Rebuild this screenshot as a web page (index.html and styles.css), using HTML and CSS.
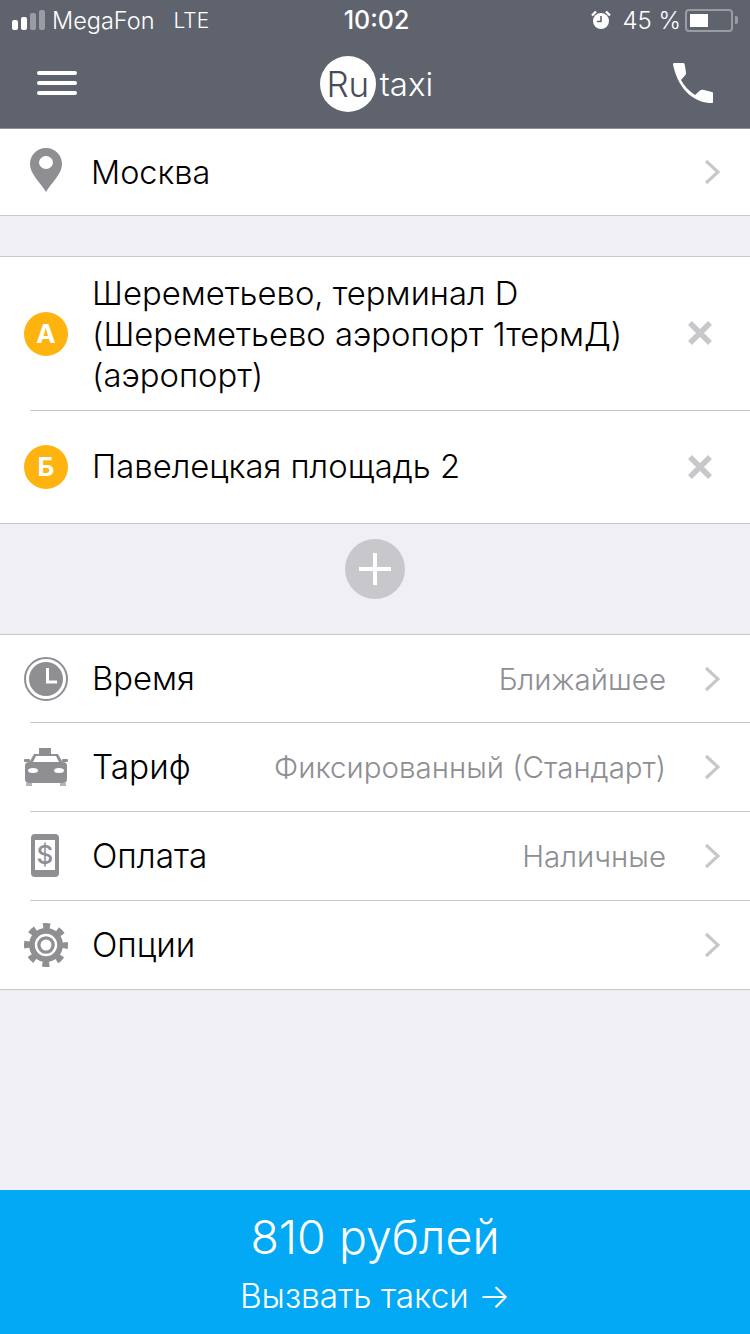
FILE: index.html
```html
<!DOCTYPE html>
<html>
<head>
    <meta charset="UTF-8">
    <meta name="viewport" content="width=device-width, initial-scale=1.0">
    <title>Rutaxi</title>
    <link rel="stylesheet" href="styles.css">
</head>
<body>
    <div class="top">
        <div class="status">
            <div class="status-left">
                <div class="signal"><i class="on"></i><i class="on"></i><i></i><i></i></div>
                <span class="carrier">MegaFon</span>
                <span class="net">LTE</span>
            </div>
            <div class="clock-text">10:02</div>
            <div class="status-right">
                <svg class="alarm" width="22" height="22" viewBox="0 0 22 22">
                    <circle cx="11" cy="12" r="8" fill="#fff"/>
                    <path d="M11 7v5.500H7" fill="none" stroke="#5f636e" stroke-width="1.600"/>
                    <path d="M2 6.500 6 2.500M20 6.500l-4-4" stroke="#fff" stroke-width="2.400"/>
                </svg>
                <span class="percent">45 %</span>
                <div class="battery"><div class="battery-fill"></div></div>
                <div class="battery-tip"></div>
            </div>
        </div>
        <div class="header">
            <div class="burger"><i></i><i></i><i></i></div>
            <div class="logo"><span class="logo-ru">Ru</span><span class="logo-taxi">taxi</span></div>
            <svg class="phone" width="41" height="41" viewBox="0 0 41 41">
                <path d="M0 1.500C0 .5.500 0 1.500 0H10c1 0 1.500.5 1.700 1.500L13 9.500c.2 1.500-.5 2.500-1.500 3.500L8 17c3 6 8 11 14 15l5-4.500c1-1 2-1 3-.7l9 2.200c1 .3 1 1 1 2v8c0 1-.5 1-1.500 1C24 40 6 30 0 1.500z" fill="#fff"/>
            </svg>
        </div>
    </div>

    <div class="group city">
        <div class="row row-city">
            <svg class="icon pin" width="44" height="44" viewBox="0 0 44 44">
                <path fill-rule="evenodd" d="M22 0c9 0 16 7 16 16 0 10-10 18-16 28C16 34 6 26 6 16 6 7 13 0 22 0zm0 8a7 6.500 0 1 0 0 13 7 6.500 0 1 0 0-13z" fill="#8e8e93"/>
            </svg>
            <div class="label">Москва</div>
            <svg class="chevron" width="16" height="26" viewBox="0 0 16 26"><path d="M2 2l12 11L2 24" fill="none" stroke="#c7c7cc" stroke-width="3.200"/></svg>
        </div>
    </div>

    <div class="group route">
        <div class="row row-a">
            <div class="point">А</div>
            <div class="label">Шереметьево, терминал D<br>(Шереметьево аэропорт 1термД)<br>(аэропорт)</div>
            <svg class="cross" width="26" height="26" viewBox="0 0 26 26"><path d="M3 3l20 20M23 3L3 23" stroke="#c7c7cc" stroke-width="5.500"/></svg>
        </div>
        <div class="row row-b">
            <div class="point">Б</div>
            <div class="label">Павелецкая площадь 2</div>
            <svg class="cross" width="26" height="26" viewBox="0 0 26 26"><path d="M3 3l20 20M23 3L3 23" stroke="#c7c7cc" stroke-width="5.500"/></svg>
        </div>
    </div>

    <div class="add-wrap">
        <div class="add">
            <svg width="32" height="32" viewBox="0 0 32 32"><path d="M16 0v32M0 16h32" stroke="#fff" stroke-width="4"/></svg>
        </div>
    </div>

    <div class="group options">
        <div class="row row-opt row-time">
            <svg class="icon" width="44" height="44" viewBox="0 0 44 44">
                <circle cx="22" cy="22" r="21" fill="none" stroke="#8e8e93" stroke-width="2"/>
                <circle cx="22" cy="22" r="17" fill="#8e8e93"/>
                <path d="M23.500 11v14H33" fill="none" stroke="#fff" stroke-width="3"/>
            </svg>
            <div class="label">Время</div>
            <div class="value">Ближайшее</div>
            <svg class="chevron" width="16" height="26" viewBox="0 0 16 26"><path d="M2 2l12 11L2 24" fill="none" stroke="#c7c7cc" stroke-width="3.200"/></svg>
        </div>
        <div class="row row-opt">
            <svg class="icon" width="44" height="38" viewBox="0 0 44 38">
                <rect x="15" y="0" width="12" height="6" fill="#8e8e93"/>
                <path d="M10 6h24l5 9H5z" fill="#8e8e93"/>
                <path d="M8.500 15l3.500-7h20l3.500 7z" fill="#fff"/>
                <rect x="0" y="11" width="6" height="3" rx="1" fill="#8e8e93"/>
                <rect x="38" y="11" width="6" height="3" rx="1" fill="#8e8e93"/>
                <rect x="1" y="14" width="42" height="21" rx="4" fill="#8e8e93"/>
                <ellipse cx="9" cy="22.500" rx="5" ry="2.500" fill="#fff"/>
                <ellipse cx="35" cy="22.500" rx="5" ry="2.500" fill="#fff"/>
                <rect x="2" y="35" width="6" height="3" fill="#b5b5b9"/>
                <rect x="36" y="35" width="6" height="3" fill="#b5b5b9"/>
            </svg>
            <div class="label">Тариф</div>
            <div class="value">Фиксированный (Стандарт)</div>
            <svg class="chevron" width="16" height="26" viewBox="0 0 16 26"><path d="M2 2l12 11L2 24" fill="none" stroke="#c7c7cc" stroke-width="3.200"/></svg>
        </div>
        <div class="row row-opt">
            <svg class="icon" width="44" height="44" viewBox="0 0 44 44">
                <rect x="7" y="0" width="28" height="43" rx="4" fill="#8e8e93"/>
                <rect x="11" y="6" width="20" height="30" fill="#fff"/>
                <text class="dollar" x="21" y="30">$</text>
            </svg>
            <div class="label">Оплата</div>
            <div class="value">Наличные</div>
            <svg class="chevron" width="16" height="26" viewBox="0 0 16 26"><path d="M2 2l12 11L2 24" fill="none" stroke="#c7c7cc" stroke-width="3.200"/></svg>
        </div>
        <div class="row row-opt">
            <svg class="icon" width="44" height="44" viewBox="0 0 44 44">
                <circle cx="22" cy="22" r="19" fill="none" stroke="#8e8e93" stroke-width="6" stroke-dasharray="7 7.920" stroke-dashoffset="3.500"/>
                <circle cx="22" cy="22" r="17" fill="#8e8e93"/>
                <circle cx="22" cy="22" r="10" fill="none" stroke="#fff" stroke-width="2.400"/>
                <circle cx="22" cy="22" r="5.500" fill="#fff"/>
            </svg>
            <div class="label">Опции</div>
            <svg class="chevron" width="16" height="26" viewBox="0 0 16 26"><path d="M2 2l12 11L2 24" fill="none" stroke="#c7c7cc" stroke-width="3.200"/></svg>
        </div>
    </div>

    <div class="order">
        <div class="price">810 рублей</div>
        <div class="call">Вызвать такси →</div>
    </div>
</body>
</html>
```

FILE: styles.css
```css
* {
    box-sizing: border-box;
}

body {
    margin: 0;
    width: 750px;
    height: 1334px;
    display: flex;
    flex-direction: column;
    background: #efeff4;
    color: #000;
    font-family: Inter, "Noto Sans", sans-serif;
    font-weight: 300;
    overflow: hidden;
}

.top {
    height: 129px;
    background: #5f636e;
    border-bottom: 1px solid #8f9198;
    color: #fff;
}

.status {
    height: 40px;
    display: flex;
    align-items: center;
    justify-content: space-between;
    padding: 0 12px;
    font-size: 24px;
    font-weight: 400;
}

.status-left, .status-right {
    width: 300px;
    display: flex;
    align-items: center;
}

.status-right {
    justify-content: flex-end;
}

.signal {
    display: flex;
    align-items: flex-end;
    gap: 3px;
    margin-right: 7px;
}

.signal i {
    width: 6px;
    height: 20px;
    border-radius: 2px;
    background: #9a9ca3;
}

.signal i:nth-child(1) {
    height: 10px;
}

.signal i:nth-child(2) {
    height: 13px;
}

.signal i:nth-child(3) {
    height: 17px;
}

.signal i.on {
    background: #fff;
}

.carrier {
    font-size: 23.500px;
    font-weight: 300;
}

.net {
    margin-left: 19px;
    font-size: 21px;
    font-weight: 300;
}

.clock-text {
    font-size: 25px;
    font-weight: 500;
    margin-left: 3px;
}

.alarm {
    margin-right: 10px;
}

.percent {
    font-weight: 300;
    margin-right: 4px;
}

.battery {
    width: 48px;
    height: 23px;
    border: 2px solid #9a9ca3;
    border-radius: 4px;
    padding: 3px;
}

.battery-fill {
    width: 18px;
    height: 13px;
    background: #fff;
}

.battery-tip {
    width: 3px;
    height: 8px;
    margin-left: 2px;
    background: #9a9ca3;
    border-radius: 0 2px 2px 0;
}

.header {
    height: 88px;
    display: flex;
    align-items: center;
    justify-content: space-between;
    padding: 0 36px 0 37px;
}

.burger {
    width: 40px;
    display: flex;
    flex-direction: column;
    gap: 6px;
    margin-bottom: 2px;
}

.burger i {
    height: 4px;
    background: #fff;
    border-radius: 2px;
}

.phone {
    margin-bottom: 2px;
}

.logo {
    display: flex;
    align-items: center;
    font-size: 33px;
    margin-left: 3px;
}

.logo-ru {
    width: 56px;
    height: 56px;
    border-radius: 50%;
    background: #fff;
    color: #484c58;
    display: flex;
    align-items: center;
    justify-content: center;
    font-size: 35px;
}

.logo-taxi {
    margin-left: 4px;
}

.group {
    background: #fff;
}

.city {
    height: 87px;
    border-bottom: 1px solid #c8c7cc;
}

.route {
    margin-top: 40px;
    border-top: 1px solid #c8c7cc;
    border-bottom: 1px solid #c8c7cc;
}

.options {
    border-top: 1px solid #c8c7cc;
    border-bottom: 1px solid #c8c7cc;
}

.row {
    display: flex;
    align-items: center;
    padding: 0 30px 0 24px;
    position: relative;
    font-size: 32.800px;
}

.row + .row::before {
    content: "";
    position: absolute;
    left: 30px;
    right: 0;
    top: 0;
    height: 1px;
    background: #c8c7cc;
}

.row-city {
    height: 86px;
    font-size: 32.400px;
}

.row-city .label {
    margin-left: -1px;
}

.row-a {
    height: 153px;
}

.row-a .label {
    padding-top: 1px;
}

.row-a .cross {
    margin-bottom: 2px;
}

.row-b {
    height: 113px;
}

.row-opt {
    height: 89px;
    font-size: 33.400px;
}

.row-opt .label {
    padding-top: 2px;
}

.row-time {
    height: 87px;
    font-size: 32.800px;
}

.row-time .label {
    padding-top: 0;
}

.icon {
    flex: none;
    margin-right: 24px;
}

.pin {
    margin-bottom: 4px;
}

.label {
    flex: 1;
    line-height: 41px;
}

.value {
    color: #8e8e93;
    font-size: 29.500px;
    margin-right: 38px;
}

.chevron {
    flex: none;
}

.point {
    flex: none;
    width: 44px;
    height: 44px;
    margin-right: 24px;
    border-radius: 50%;
    background: #ffb30f;
    color: #fff;
    display: flex;
    align-items: center;
    justify-content: center;
    font-size: 26px;
    font-weight: 700;
}

.cross {
    flex: none;
    margin-right: 7px;
}

.add-wrap {
    height: 110px;
    padding-top: 15px;
    display: flex;
    justify-content: center;
}

.add {
    width: 60px;
    height: 60px;
    border-radius: 50%;
    background: #c7c7cc;
    display: flex;
    align-items: center;
    justify-content: center;
}

.dollar {
    fill: #8e8e93;
    font-size: 26px;
    font-weight: 500;
    text-anchor: middle;
}

.order {
    margin-top: auto;
    height: 144px;
    background: #03a9f4;
    color: #fff;
    text-align: center;
    padding-top: 19px;
}

.price {
    font-size: 46.500px;
    line-height: 56px;
}

.call {
    font-size: 33.400px;
    line-height: 44px;
    margin-top: 9px;
}
```
